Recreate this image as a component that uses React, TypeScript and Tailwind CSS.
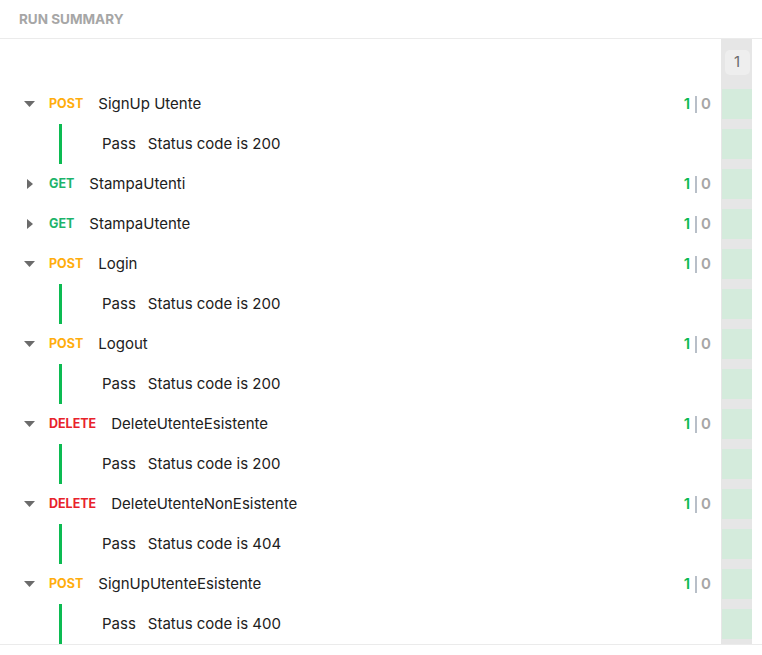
import React from 'react'

type Req = {
  method: 'POST' | 'GET' | 'DELETE'
  name: string
  open: boolean
  test?: string
}

const requests: Req[] = [
  { method: 'POST', name: 'SignUp Utente', open: true, test: 'Status code is 200' },
  { method: 'GET', name: 'StampaUtenti', open: false },
  { method: 'GET', name: 'StampaUtente', open: false },
  { method: 'POST', name: 'Login', open: true, test: 'Status code is 200' },
  { method: 'POST', name: 'Logout', open: true, test: 'Status code is 200' },
  { method: 'DELETE', name: 'DeleteUtenteEsistente', open: true, test: 'Status code is 200' },
  { method: 'DELETE', name: 'DeleteUtenteNonEsistente', open: true, test: 'Status code is 404' },
  { method: 'POST', name: 'SignUpUtenteEsistente', open: true, test: 'Status code is 400' },
]

const methodColor = {
  POST: 'text-[#ffad0d]',
  GET: 'text-[#1cb46b]',
  DELETE: 'text-[#e8222b]',
}

const Caret = ({ open }: { open: boolean }) => (
  <div className="w-[11px] flex justify-center">
    {open ? (
      <svg width="11" height="6" viewBox="0 0 11 6">
        <path d="M0 0 L11 0 L5.5 6 Z" fill="#6b6b6b" />
      </svg>
    ) : (
      <svg width="6" height="10" viewBox="0 0 6 10">
        <path d="M0 0 L6 5 L0 10 Z" fill="#6b6b6b" />
      </svg>
    )}
  </div>
)

const App = () => {
  // flatten rows so the side column can follow them
  const rows: { kind: 'req' | 'test'; req: Req }[] = []
  requests.forEach((r) => {
    rows.push({ kind: 'req', req: r })
    if (r.open && r.test) rows.push({ kind: 'test', req: r })
  })

  return (
    <div className="w-[762px] h-[655px] bg-white font-['Inter','Noto_Sans',sans-serif] text-[#212121] overflow-hidden">
      <div className="h-[39px] border-b border-[#ebebeb] px-[19px] flex items-center">
        <span className="text-[13.5px] font-bold text-[#a6a6a6]">RUN SUMMARY</span>
      </div>

      <div className="flex border-b border-[#ebebeb] h-[606px]">
        <div className="w-[722px] border-r border-[#e6e6e6] pt-[45px]">
          {rows.map((row, i) =>
            row.kind === 'req' ? (
              <div key={i} className="h-[40px] flex items-center pl-[24px] pr-[10px]">
                <Caret open={row.req.open} />
                <span className={`ml-[14px] text-[12.5px] font-bold ${methodColor[row.req.method]}`}>
                  {row.req.method}
                </span>
                <span className="ml-[15px] text-[15px]">{row.req.name}</span>
                <div className="ml-auto flex items-center text-[15px] font-semibold">
                  <span className="text-[#0cbb52]">1</span>
                  <span className="ml-[5px] w-[2px] h-[17px] bg-[#b8bfc8]"></span>
                  <span className="ml-[4px] text-[#a6a6a6]">0</span>
                </div>
              </div>
            ) : (
              <div key={i} className="h-[40px] flex items-stretch pl-[59px]">
                <div className="w-[3px] bg-[#0cbb52]"></div>
                <div className="flex items-center text-[15px]">
                  <span className="ml-[40px]">Pass</span>
                  <span className="ml-[12px]">{row.req.test}</span>
                </div>
              </div>
            )
          )}
        </div>

        <div className="w-[30px] bg-[#e6e6e6] flex flex-col">
          <div className="h-[45px] flex justify-center pt-[11px]">
            <div className="w-[25px] h-[25px] rounded-[5px] bg-[#eeeeee] flex items-center justify-center text-[15px] text-[#6b6b6b]">
              1
            </div>
          </div>
          {rows.map((_, i) => (
            <div key={i} className="h-[40px] py-[5px]">
              <div className="h-full bg-[#d4ebdc]"></div>
            </div>
          ))}
        </div>
      </div>
    </div>
  )
}

export default App
